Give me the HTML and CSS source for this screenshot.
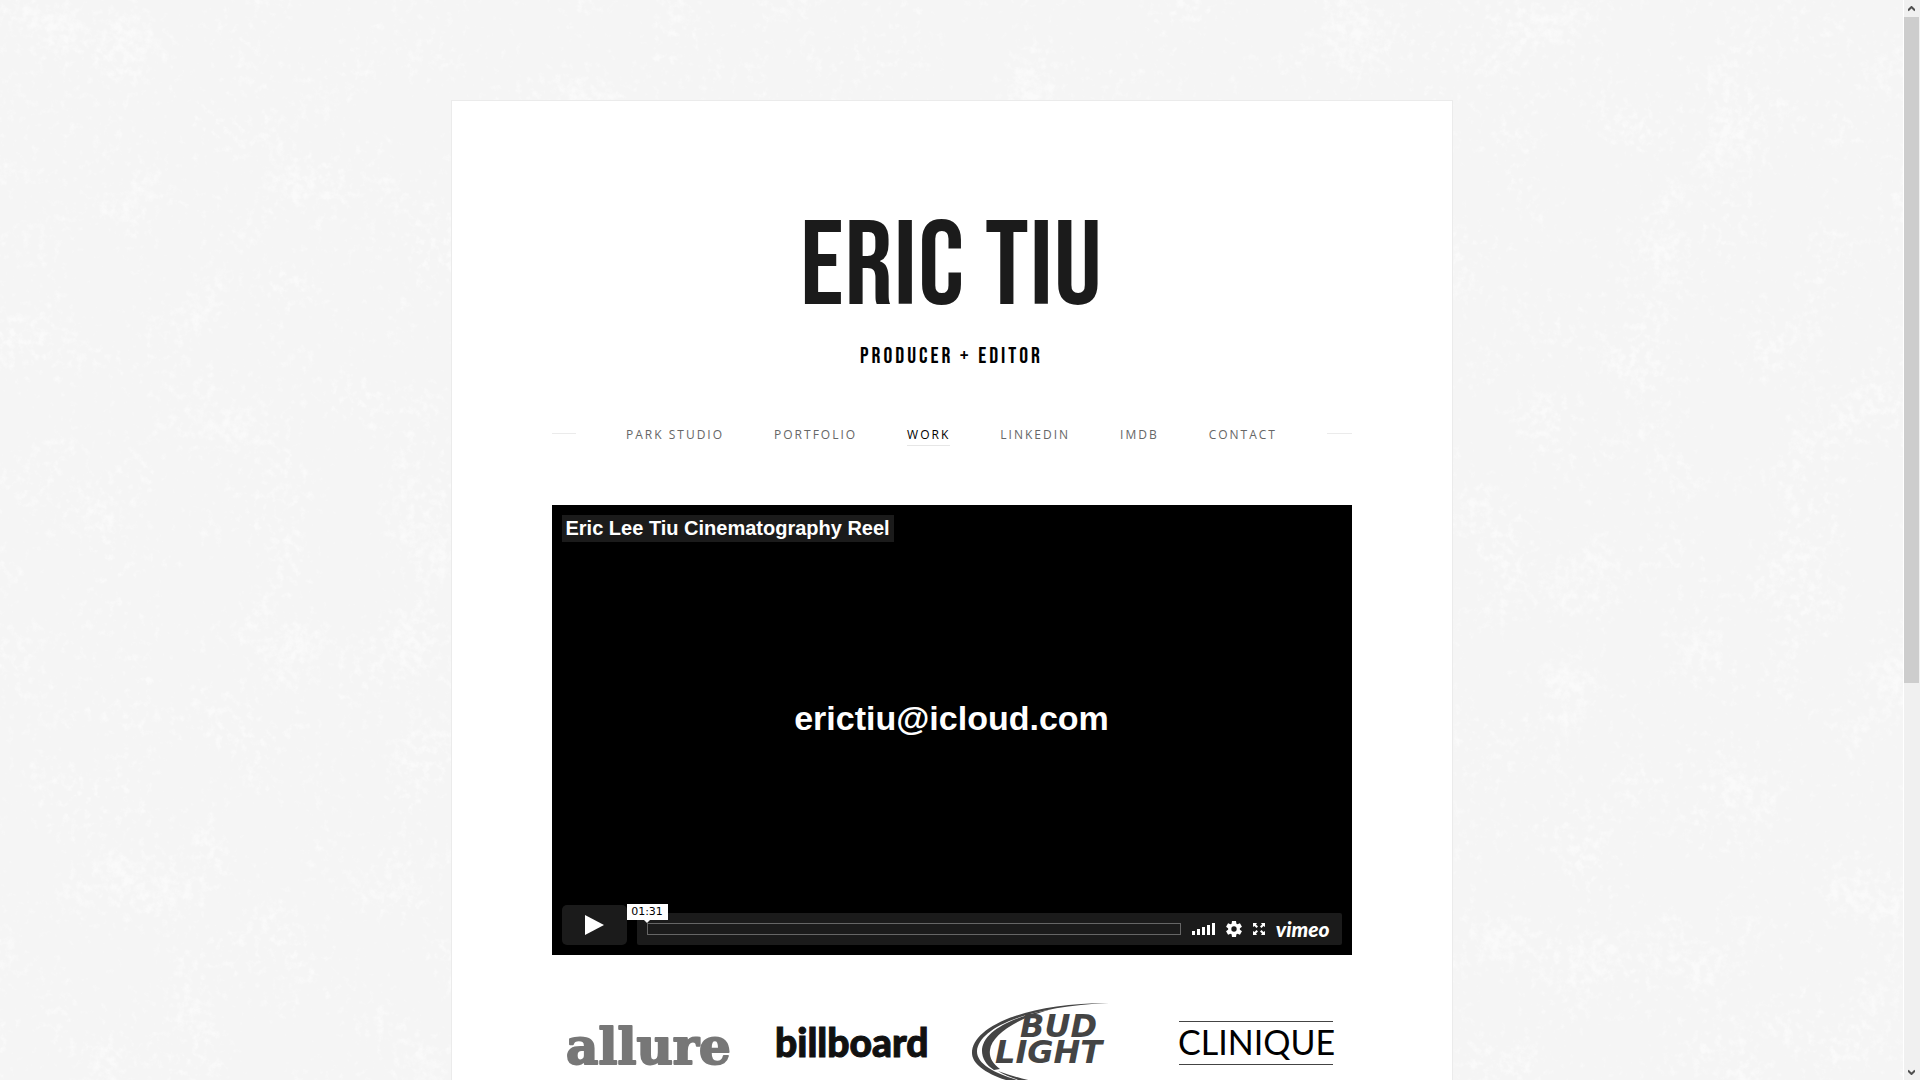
FILE: index.html
```html
<!DOCTYPE html>
<html lang="en">
<head>
<meta charset="utf-8">
<title>Eric Tiu</title>
<link rel="stylesheet" href="styles.css">
</head>
<body>
<div class="shell">
  <div class="page">
    <svg class="texture" aria-hidden="true">
      <filter id="plaster" x="0" y="0" width="100%" height="100%">
        <feTurbulence type="fractalNoise" baseFrequency="0.013" numOctaves="3" seed="8" result="large"/>
        <feTurbulence type="fractalNoise" baseFrequency="0.13" numOctaves="3" seed="3" result="small"/>
        <feComposite in="large" in2="small" operator="arithmetic" k1="0" k2="0.5" k3="0.6" k4="0"/>
        <feColorMatrix values="0 0 0 0 1  0 0 0 0 1  0 0 0 0 1  5 0 0 0 -2.7"/>
      </filter>
      <rect width="100%" height="100%" filter="url(#plaster)"/>
    </svg>
    <main class="card">
      <header class="masthead">
        <h1 class="name">ERIC TIU</h1>
        <p class="role">PRODUCER + EDITOR</p>
      </header>
      <nav class="menu">
        <a href="#park">PARK STUDIO</a>
        <a href="#portfolio">PORTFOLIO</a>
        <a href="#work" class="current">WORK</a>
        <a href="#linkedin">LINKEDIN</a>
        <a href="#imdb">IMDB</a>
        <a href="#contact">CONTACT</a>
      </nav>
      <section class="video">
        <a class="video-title" href="#reel">Eric Lee Tiu Cinematography Reel</a>
        <p class="video-frame">erictiu@icloud.com</p>
        <div class="controls">
          <button class="play" aria-label="Play"><svg width="19" height="20" viewBox="0 0 19 20"><path d="M0 0L19 10L0 20Z" fill="#fff"/></svg></button>
          <div class="bar">
            <div class="progress"><span class="time">01:31</span></div>
            <button class="icon" aria-label="Volume"><svg width="23" height="12" viewBox="0 0 23 12" fill="#fff"><path d="M0 8h3v4H0zM5 6h3v6H5zM10 4h3v8h-3zM15 2h3v10h-3zM20 0h3v12h-3z"/></svg></button>
            <button class="icon" aria-label="Settings"><svg width="16" height="16" viewBox="0 0 16 16"><g fill="#fff"><circle cx="8" cy="8" r="5.8"/><path id="tooth" d="M6 0h4l.6 4H5.400z"/><use href="#tooth" transform="rotate(60 8 8)"/><use href="#tooth" transform="rotate(120 8 8)"/><use href="#tooth" transform="rotate(180 8 8)"/><use href="#tooth" transform="rotate(240 8 8)"/><use href="#tooth" transform="rotate(300 8 8)"/></g><circle cx="8" cy="8" r="2.700" fill="#1a1a1a"/></svg></button>
            <button class="icon" aria-label="Full screen"><svg width="12" height="12" viewBox="0 0 12 12" fill="#fff"><path id="corner" d="M0 0h4L3 1.500L5 3.500L3.500 5L1.500 3L0 4z"/><use href="#corner" transform="rotate(90 6 6)"/><use href="#corner" transform="rotate(180 6 6)"/><use href="#corner" transform="rotate(270 6 6)"/></svg></button>
            <a class="vimeo" href="#vimeo">vimeo</a>
          </div>
        </div>
      </section>
      <section class="clients">
        <svg viewBox="0 0 200 100" role="img" aria-label="allure"><text class="allure" x="14" y="64">allure</text></svg>
        <svg viewBox="0 0 200 100" role="img" aria-label="billboard"><text class="billboard" x="23" y="57">billboard</text></svg>
        <svg viewBox="0 0 200 100" role="img" aria-label="Bud Light">
          <path fill="#444" d="M157 3C70 3 20 28 20 53C20 70 55 87 116 90C74 85 24 72 25 51C27 29 70 7 157 3Z"/>
          <path fill="#444" d="M100 9C58 17 30 32 30 51C30 58 34 65 42 70L48 69C40 63 37 57 38 50C40 34 66 18 100 9Z"/>
          <path fill="#444" d="M46 71C68 79 88 83 116 88C90 87 62 81 46 71Z"/>
          <text class="bud" x="68" y="37">BUD</text>
          <text class="bud" x="43" y="63">LIGHT</text>
        </svg>
        <svg viewBox="0 0 200 100" role="img" aria-label="Clinique">
          <path d="M27 21.500H181M27 64.500H181" stroke="#444"/>
          <text class="clinique" x="26" y="55">CLINIQUE</text>
        </svg>
      </section>
    </main>
  </div>
  <div class="scroller">
    <button aria-label="Scroll up"><svg width="7" height="6" viewBox="0 0 7 6"><path d="M0 4.500L3.500 1L7 4.500" fill="none" stroke="#505050" stroke-width="2"/></svg></button>
    <div class="track"><div class="thumb"></div></div>
    <button aria-label="Scroll down"><svg width="7" height="6" viewBox="0 0 7 6"><path d="M0 1.500L3.500 5L7 1.500" fill="none" stroke="#505050" stroke-width="2"/></svg></button>
  </div>
</div>
</body>
</html>
```
FILE: styles.css
```css
* { box-sizing: border-box; }
body { margin: 0; background: #f5f5f5; font-family: "Open Sans", sans-serif; }
h1, p { margin: 0; }
button { border: 0; padding: 0; margin: 0; background: none; display: flex; align-items: center; justify-content: center; }
a { text-decoration: none; }

.shell { display: flex; height: 100vh; overflow: hidden; }
.page { position: relative; flex: 1; overflow: hidden; padding: 100px 20px 0; }
.texture { position: absolute; inset: 0; width: 100%; height: 100%; opacity: .5; }

.card { position: relative; max-width: 1002px; margin: 0 auto; padding: 100px; background: #fff; border: 1px solid #ebebeb; }
.masthead { text-align: center; }
.name { font: 120px/134px "Bebas Neue", "Liberation Sans Narrow", sans-serif; letter-spacing: 1px; color: #1b1b1b; }
.role { margin-top: 7px; font: 22px/30px "Bebas Neue", "Liberation Sans Narrow", sans-serif; letter-spacing: 3px; color: #000; }

.menu { display: flex; align-items: center; gap: 50px; margin-top: 48px; }
.menu::before, .menu::after { content: ""; flex: 1; height: 1px; background: #ebebeb; }
.menu a { padding: 6px 0 1px; font-size: 12px; line-height: 18px; letter-spacing: 2px; color: #666; border-bottom: 1px solid transparent; }
.menu .current { color: #000; border-color: #e6e6e6; }

.video { display: flex; flex-direction: column; justify-content: space-between; align-items: flex-start; aspect-ratio: 16 / 9; margin-top: 59px; padding: 10px; background: #000; }
.video-title { padding: 0 4px; background: #1b1b1b; color: #fff; font: bold 20px/27px "Liberation Sans", sans-serif; }
.video-frame { align-self: center; margin-bottom: 12px; font: bold 34px/40px "Liberation Sans", sans-serif; color: #fff; }
.controls { display: flex; align-items: flex-end; gap: 10px; width: 100%; }
.play { width: 65px; height: 40px; background: #1b1b1b; border-radius: 5px; }
.bar { flex: 1; display: flex; align-items: center; gap: 11px; height: 32px; padding: 0 12px 0 10px; background: #1b1b1b; border-radius: 2px; }
.progress { position: relative; flex: 1; height: 12px; border: 1px solid #666; }
.time { position: absolute; left: -21px; top: -20px; width: 41px; background: #fff; color: #000; font: 11px/16px "DejaVu Sans", sans-serif; text-align: center; }
.time::after { content: ""; position: absolute; left: 17px; top: 16px; border: 3px solid transparent; border-top-color: #fff; border-bottom: 0; }
.vimeo { font: italic 900 21px/24px Lato, sans-serif; color: #fff; }

.clients { display: grid; grid-template-columns: repeat(4, 1fr); margin-top: 45px; }
.clients svg { width: 100%; }
.allure { font: bold 50px "DejaVu Serif", serif; fill: #777; stroke: #777; stroke-width: 2px; stroke-linejoin: round; }
.billboard { font: 900 39px Lato, sans-serif; fill: #111; stroke: #111; stroke-width: 1px; }
.bud { font: italic bold 32px "DejaVu Sans", sans-serif; fill: #444; }
.clinique { font: 34px Lato, sans-serif; fill: #000; }

.scroller { display: flex; flex-direction: column; width: 17px; padding-right: 1px; background: #f0f0f0; border-left: 1px solid #fff; }
.scroller button { height: 17px; }
.track { flex: 1; display: grid; grid-template-rows: 7fr 4fr; }
.thumb { background: #cdcdcd; }
```
